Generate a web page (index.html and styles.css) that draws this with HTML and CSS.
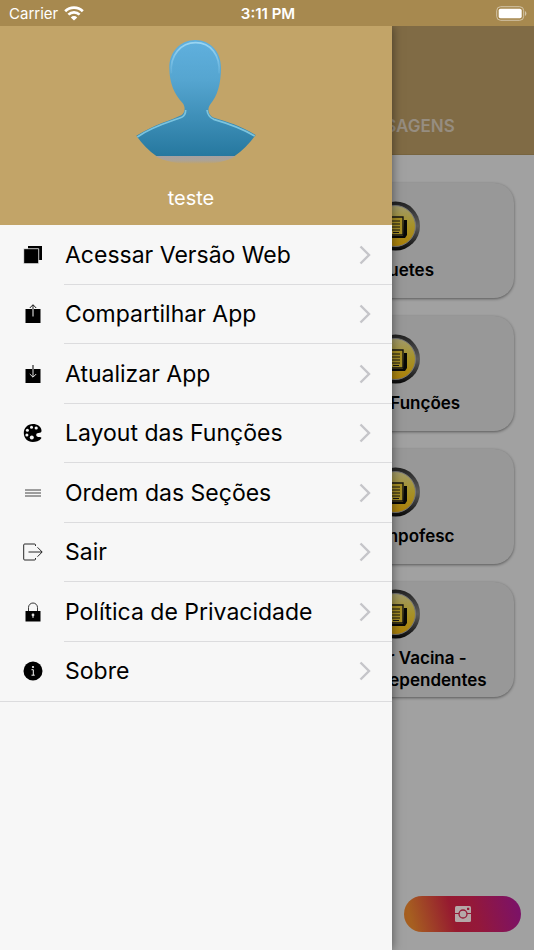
FILE: index.html
```html
<!DOCTYPE html>
<html lang="pt-BR">
<head>
<meta charset="utf-8">
<meta name="viewport" content="width=device-width, initial-scale=1">
<title>Menu</title>
<link rel="stylesheet" href="styles.css">
</head>
<body>
<svg class="defs" aria-hidden="true">
  <defs>
    <linearGradient id="rim" x1="0" y1="0" x2="0" y2="1">
      <stop offset="0" stop-color="#202020"/><stop offset=".5" stop-color="#5c5c5c"/><stop offset="1" stop-color="#080808"/>
    </linearGradient>
    <linearGradient id="gold" x1="0" y1="0" x2="0" y2="1">
      <stop offset="0" stop-color="#a19a6c"/><stop offset=".45" stop-color="#a6932c"/><stop offset="1" stop-color="#ac8008"/>
    </linearGradient>
    <symbol id="news" viewBox="0 0 50 50">
      <circle cx="24.500" cy="25" r="24.500" fill="url(#rim)"/>
      <circle cx="24" cy="25" r="20.500" fill="url(#gold)" stroke="#777" stroke-width="1"/>
      <path d="M33 19h3v15l-2 3H13l-2-2h21z" fill="#080808"/>
      <path d="M14 16h18v18H14z" fill="#a78f25" stroke="#141414" stroke-width="1.400"/>
      <path d="M19 20h10M19 23h10M19 26h10M19 29h10M22 31.500h6" stroke="#141414" stroke-width="1"/>
    </symbol>
    <symbol id="chevron" viewBox="0 0 12 20">
      <path d="M1.500 1.500 10 10l-8.500 8.500" fill="none" stroke="#c5c5c9" stroke-width="2.400"/>
    </symbol>
  </defs>
</svg>
<div class="app">
  <div class="status">
    <span class="carrier">Carrier
      <svg width="20" height="15" viewBox="0 0 20 15" aria-hidden="true"><g fill="none" stroke="#fff" stroke-width="2.700"><path d="M1.200 5.200a12.500 12.500 0 0 1 17.600 0"/><path d="M4.400 8.600a8 8 0 0 1 11.200 0"/></g><path d="M10 14.600 6.800 11.400a4.600 4.600 0 0 1 6.400 0z" fill="#fff"/></svg>
    </span>
    <time class="clock">3:11 PM</time>
    <svg class="battery" width="32" height="15" viewBox="0 0 32 15" aria-hidden="true"><rect x="1.700" y=".7" width="27" height="13.600" rx="4" fill="none" stroke="#d3c4a7" stroke-width="1"/><rect x="3.700" y="2.700" width="23" height="9.600" rx="1.800" fill="#fff"/><path d="M30 5v5q1.400-.7 1.400-2.500T30 5z" fill="#d3c4a7"/></svg>
  </div>
  <main class="page">
    <nav class="tabs"><a href="#funcoes">FUNÇÕES</a><a href="#mensagens">MENSAGENS</a></nav>
    <section class="cards">
      <a class="card" href="#enquetes"><svg><use href="#news"/></svg><span>Enquetes</span></a>
      <a class="card" href="#funcoes"><svg><use href="#news"/></svg><span>Outras Funções</span></a>
      <a class="card" href="#site"><svg><use href="#news"/></svg><span>Site Sinpofesc</span></a>
      <a class="card" href="#vacina"><svg><use href="#news"/></svg><span>Agendar Vacina -<br>Filiado e Dependentes</span></a>
    </section>
    <button class="social" type="button" aria-label="Instagram">
      <svg width="16" height="16" viewBox="0 0 16 16" aria-hidden="true"><rect width="16" height="16" rx="1.500" fill="#b5a8a8"/><path d="M0 7.500h4m8 0h4" stroke="#961a36" stroke-width="1"/><circle cx="8" cy="8" r="4" fill="#b5a8a8" stroke="#961a36" stroke-width="1.300"/><rect x="12" y="1.700" width="2.300" height="2.300" rx=".4" fill="#961a36"/></svg>
    </button>
  </main>
  <aside class="drawer">
    <header class="profile">
      <svg width="120" height="125" viewBox="50 30 360 375" aria-hidden="true">
        <defs>
          <linearGradient id="body" gradientUnits="userSpaceOnUse" x1="0" y1="30" x2="0" y2="378"><stop offset="0" stop-color="#60b0de"/><stop offset=".35" stop-color="#55a5d0"/><stop offset="1" stop-color="#26789f"/></linearGradient>
          <linearGradient id="base" x1="0" y1="0" x2="0" y2="1"><stop offset="0" stop-color="#a3a0a3"/><stop offset=".6" stop-color="#ada394"/><stop offset="1" stop-color="#c2a468"/></linearGradient>
          <linearGradient id="shine" gradientUnits="userSpaceOnUse" x1="0" y1="36" x2="0" y2="145"><stop offset="0" stop-color="#9ad5f2"/><stop offset="1" stop-color="#9ad5f2" stop-opacity="0"/></linearGradient>
        </defs>
        <path d="M108 377H349Q315 402 230 402T108 377z" fill="url(#base)"/>
        <path d="M228 30C184 30 150 64 150 113C150 160 166 194 189 218C198 228 199 246 187 255C158 270 108 282 51 317Q78 355 111 378H346Q380 355 409 315C365 287 322 274 284 263C267 256 263 237 272 224C294 198 305 163 305 113C305 64 272 30 228 30z" fill="url(#body)"/>
        <path d="M156 130C151 75 185 38 229 38S304 75 299 130" fill="none" stroke="url(#shine)" stroke-width="5"/>
        <path d="M54 321C100 288 160 273 187 262Q199 256 199 240M263 240Q265 260 283 268C325 280 365 293 406 318" fill="none" stroke="#7cc4de" stroke-width="5"/>
      </svg>
      <p>teste</p>
    </header>
    <nav class="menu">
      <a href="#web"><svg class="icon" viewBox="0 0 20 20"><path d="M5 1h14v14H5z"/><path d="M.7 3.700h15v15h-15z" stroke="#f7f7f7" stroke-width=".8"/></svg><span>Acessar Versão Web</span><svg class="chevron"><use href="#chevron"/></svg></a>
      <a href="#compartilhar"><svg class="icon" viewBox="0 0 20 20"><path d="M2.500 5h15v14h-15z"/><path d="M10 1v4M6.800 4 10 .7 13.200 4" fill="none" stroke="#000" stroke-width=".9"/><path d="M10 5v7.500" stroke="#f7f7f7"/></svg><span>Compartilhar App</span><svg class="chevron"><use href="#chevron"/></svg></a>
      <a href="#atualizar"><svg class="icon" viewBox="0 0 20 20"><path d="M2.500 5h15v14h-15z"/><path d="M10 1v4" stroke="#000"/><path d="M10 5v8M6.800 10 10 13.200 13.200 10" fill="none" stroke="#f7f7f7" stroke-width=".9"/></svg><span>Atualizar App</span><svg class="chevron"><use href="#chevron"/></svg></a>
      <a href="#layout"><svg class="icon" viewBox="0 0 20 20"><path d="M9.800 1C4.500 1 .8 5 .8 10s3.700 9 9 9c3 0 6.500-1 8.200-3.200.9-1.200.2-1.900-1.200-1.900-2 .1-3.600-.5-3.600-2 0-1.700 2-1.800 3.600-2.100 1.400-.3 1.800-1 1.700-2.300C18.200 3.500 14.400 1 9.800 1z"/><g fill="#f7f7f7"><circle cx="8.500" cy="4.200" r="1.500"/><circle cx="13.200" cy="5" r="1.600"/><circle cx="4.400" cy="7.200" r="1.500"/><circle cx="3.900" cy="12" r="1.500"/><circle cx="8.800" cy="14.500" r="2"/></g></svg><span>Layout das Funções</span><svg class="chevron"><use href="#chevron"/></svg></a>
      <a href="#ordem"><svg class="icon" viewBox="0 0 20 20"><path d="M2 7h16M2 10h16M2 13h16" stroke="#444" stroke-width="1"/></svg><span>Ordem das Seções</span><svg class="chevron"><use href="#chevron"/></svg></a>
      <a href="#sair"><svg class="icon" viewBox="0 0 20 20"><path d="M12.500 4V3q0-1-1-1H1.700q-1 0-1 1v14q0 1 1 1h9.800q1 0 1-1v-1M5.500 10H19M14.500 5.300 19.200 10l-4.700 4.700" fill="none" stroke="#111" stroke-width=".9"/></svg><span>Sair</span><svg class="chevron"><use href="#chevron"/></svg></a>
      <a href="#politica"><svg class="icon" viewBox="0 0 20 20"><path d="M2.500 9h15v10.500h-15z"/><path d="M5.500 9V5.500a4.500 4.500 0 0 1 9 0V9" fill="none" stroke="#222" stroke-width=".9"/><circle cx="10" cy="13" r="1.400" fill="#ddd"/><path d="M10 13v3" stroke="#ddd"/></svg><span>Política de Privacidade</span><svg class="chevron"><use href="#chevron"/></svg></a>
      <a href="#sobre"><svg class="icon" viewBox="0 0 20 20"><circle cx="10" cy="10" r="9.500"/><circle cx="10" cy="6" r="1.100" fill="#f7f7f7"/><path d="M8.500 8.700h1.800v5.300M8.500 14.200h3.200" fill="none" stroke="#f7f7f7" stroke-width="1"/></svg><span>Sobre</span><svg class="chevron"><use href="#chevron"/></svg></a>
    </nav>
  </aside>
</div>
</body>
</html>
```
FILE: styles.css
```css
* { box-sizing: border-box; }
body { margin: 0; font-family: Inter, "Liberation Sans", sans-serif; color: #000; }
a { color: inherit; text-decoration: none; }
.defs { position: absolute; width: 0; height: 0; }

.app {
  position: relative;
  display: flex;
  flex-direction: column;
  min-height: 100vh;
  overflow: hidden;
}

.status {
  position: relative;
  z-index: 2;
  display: grid;
  grid-template-columns: 1fr auto 1fr;
  align-items: center;
  height: 26px;
  padding: 1px 7px 0 9px;
  background: #a7894f;
  color: #fff;
  font-size: 15px;
}
.carrier { display: flex; align-items: center; gap: 6px; }
.clock { font-weight: 600; }
.battery { justify-self: end; }

.page {
  flex: 1;
  display: flex;
  flex-direction: column;
  background: #a1a1a1;
}
.tabs {
  display: grid;
  grid-template-columns: 1fr 1fr;
  align-items: end;
  height: 129px;
  padding-bottom: 17px;
  background: #806b45;
  border-bottom: 1px solid #77643f;
  color: #968d80;
  font-size: 17px;
  line-height: 22px;
  font-weight: 600;
  text-align: center;
}
.cards {
  display: grid;
  gap: 18px;
  margin-left: 50%;
  padding: 28px 20px 28px 10px;
}
.card {
  display: flex;
  flex-direction: column;
  align-items: center;
  justify-content: center;
  gap: 8px;
  height: 115px;
  border-radius: 20px;
  background: #989898;
  box-shadow: 0 1px 3px rgba(0, 0, 0, .45);
  font-size: 17px;
  line-height: 22px;
  font-weight: 600;
  text-align: center;
  white-space: nowrap;
}
.card svg { width: 50px; height: 50px; }
.social {
  display: grid;
  place-items: center;
  align-self: flex-end;
  width: 117px;
  height: 36px;
  margin: auto 13px 18px;
  padding: 0;
  border: 0;
  border-radius: 18px;
  background: linear-gradient(75deg, #a65f20 8%, #961a30 42%, #94183a 60%, #7c1266 95%);
}

.drawer {
  position: absolute;
  z-index: 1;
  top: 26px;
  bottom: 0;
  left: 0;
  width: 392px;
  max-width: 90%;
  background: #f7f7f7;
  box-shadow: 0 0 10px rgba(0, 0, 0, .5);
}
.profile {
  display: flex;
  flex-direction: column;
  align-items: center;
  height: 199px;
  padding-top: 14px;
  background: #c2a468;
  color: #fff;
}
.profile p {
  width: 100%;
  margin: 0;
  padding: 20px 10px 0 0;
  font-size: 20px;
  line-height: 26px;
  text-align: center;
}
.menu {
  display: grid;
  grid-auto-rows: 1fr;
  height: 477px;
  border-bottom: 1px solid #dcdcde;
}
.menu a {
  display: grid;
  grid-template-columns: 20px 1fr 12px;
  column-gap: 22px;
  align-items: center;
  padding: 0 21px 0 23px;
  font-size: 23px;
  line-height: 30px;
  white-space: nowrap;
  background: linear-gradient(#dcdcde, #dcdcde) 64px 100% / 100% 1px no-repeat;
}
.menu a:last-child { background: none; }
.icon { width: 20px; height: 20px; }
.chevron { width: 12px; height: 20px; }
```
